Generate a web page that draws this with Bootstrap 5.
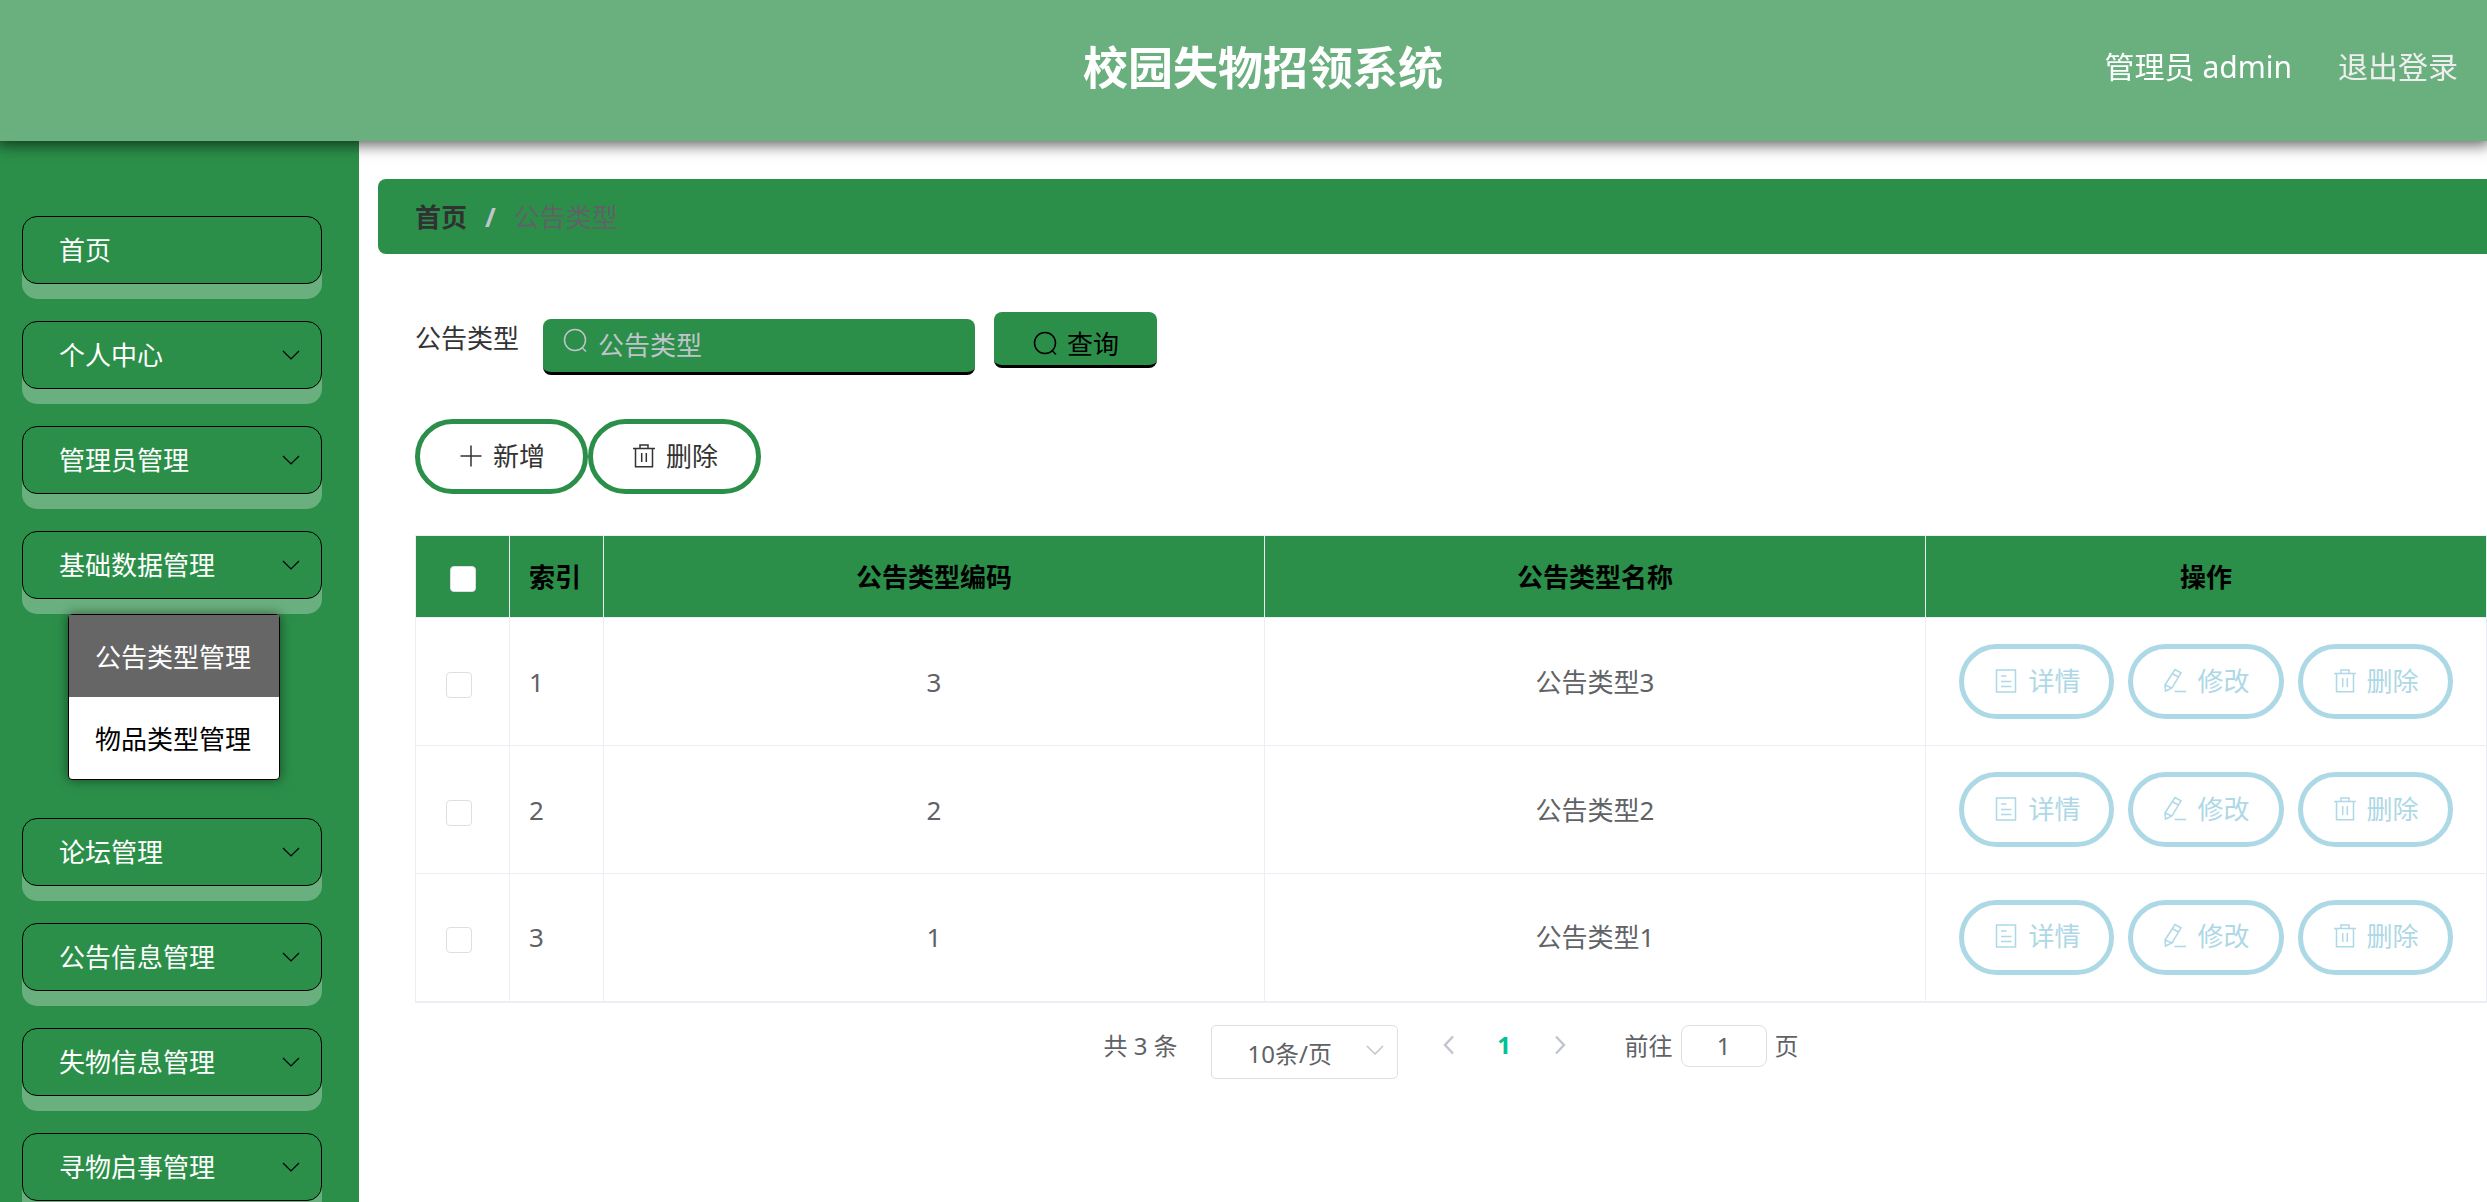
<!DOCTYPE html>
<html lang="zh-CN">
<head>
<meta charset="utf-8">
<meta name="viewport" content="width=device-width, initial-scale=1">
<title>校园失物招领系统</title>
<link href="https://cdn.jsdelivr.net/npm/bootstrap@5.3.0/dist/css/bootstrap.min.css" rel="stylesheet">
<style>
:root { --brand: #2b8f49; --brand-soft: #6ab07f; --line: #ebeef5; --ctl: #dcdfe6; --txt: #606266; }
body { font-family: "Noto Sans", "Noto Sans CJK SC", sans-serif; font-size: 26px; line-height: 36px; color: #333; background: #fff; }
.ico { width: 26px; height: 26px; flex: none; fill: none; stroke: currentColor; stroke-width: 1.5; }
.topbar { height: 141px; background: var(--brand-soft); box-shadow: 0 1px 14px 3px rgba(0,0,0,.62); z-index: 5; color: #fff; padding-bottom: 6px; }
.sys-title { font-size: 45px; line-height: 60px; font-weight: 700; margin-left: 44px; }
.userbox { font-size: 30px; line-height: 40px; gap: 46px; padding: 0 29px 2px 0; }
.userbox a { color: #eee; }
.side { width: 359px; background: var(--brand); padding: 75px 37px 30px 22px; overflow-y: auto; scrollbar-width: none; }
.side::-webkit-scrollbar { display: none; }
.side-btn { height: 68px; width: 100%; background: var(--brand); border: 1px solid #000; border-radius: 15px; box-shadow: 0 15px 0 var(--brand-soft); color: #fff; padding: 0 17px 0 36px; margin-bottom: 37px; flex: none; text-align: left; text-decoration: none; }
.side-btn .ico { color: #000; stroke-width: 1.2; }
.side-btn.opened { margin-bottom: 15px; }
.submenu { width: 212px; margin: 0 0 38px 46px; border: 1px solid #000; border-radius: 4px; box-shadow: 0 0 12px rgba(0,0,0,.5); background: #fff; z-index: 1; }
.submenu a { display: block; height: 82px; line-height: 84px; padding-left: 26px; color: #000; text-decoration: none; }
.submenu a.active { background: #666; color: #fff; }
.main-area { min-width: 0; padding: 38px 0 0 19px; overflow: hidden; }
.crumbs { height: 75px; background: var(--brand); border-radius: 8px 0 0 8px; padding-left: 37px; margin: 0; --bs-breadcrumb-divider-color: #c0c4cc; --bs-breadcrumb-item-padding-x: 18px; }
.crumbs a { color: #303133; font-weight: 700; text-decoration: none; }
.crumbs .breadcrumb-item + .breadcrumb-item::before { font-weight: 700; }
.crumbs .active { color: var(--txt); }
.content { padding: 58px 0 0 37px; }
.search-box { width: 432px; margin: 7px 19px 0 24px; }
.search-box input { width: 100%; height: 56px; background: var(--brand); border: 0; border-bottom: 3px solid #000; border-radius: 8px; padding: 0 20px 2px 55px; color: #fff; }
.search-box input::placeholder { color: #c0c4cc; opacity: 1; }
.search-box .ico { position: absolute; left: 19px; top: 9px; color: #c0c4cc; }
.query-btn { height: 56px; background: var(--brand); border: 0; border-bottom: 3px solid #000; border-radius: 8px; padding: 10px 38px 0; gap: 9px; color: #000; }
.pill { height: 75px; border: 5px solid var(--brand); border-radius: 38px; background: #fff; color: #333; gap: 9px; padding: 0 38px 2px; }
.pill-sm { border-color: #add8e6; color: #add8e6; padding: 0 29px 2px; }
.row-acts { gap: 14px; }
.tools { margin: 44px 0 41px; }
.grid { table-layout: fixed; width: 100%; border-collapse: collapse; color: var(--txt); border: 1px solid var(--line); border-bottom-width: 2px; }
.grid th, .grid td { border: 1px solid var(--line); text-align: center; padding: 0; }
.grid th { height: 82px; background: var(--brand); color: #000; font-weight: 700; }
.grid td { height: 128px; }
.grid .idx { text-align: left; padding-left: 19px; }
.grid .form-check-input[type=checkbox] { width: 26px; height: 26px; margin: 0 8px 0 0; border: 1px solid var(--ctl); border-radius: 4px; vertical-align: middle; background-color: #fff; }
.grid th .form-check-input[type=checkbox] { margin: 0; }
.pager { font-size: 24px; color: var(--txt); padding: 22px 0 0; }
.pager-total { line-height: 42px; }
.size-pick { width: 187px; margin: 0 38px 0 33px; }
.size-pick select { width: 100%; height: 54px; appearance: none; border: 1px solid var(--ctl); border-radius: 5px; background: #fff; color: var(--txt); padding: 4px 0 0 36px; }
.size-pick .ico { position: absolute; right: 10px; top: 12px; color: #c0c4cc; pointer-events: none; }
.pager-btn { background: none; border: 0; padding: 0; color: #c0c4cc; height: 40px; }
.pager-btn .ico { stroke-width: 2.4; display: block; }
.pager-now { font-weight: 700; color: #00c292; height: 40px; margin: 0 35px; width: 15px; background: none; border: 0; padding: 0; }
.jump { margin-left: 52px; gap: 8px; }
.jump input { width: 86px; height: 42px; border: 1px solid var(--ctl); border-radius: 8px; text-align: center; color: var(--txt); padding: 0; }
</style>
<script src="https://cdn.jsdelivr.net/npm/bootstrap@5.3.0/dist/js/bootstrap.bundle.min.js"></script>
</head>
<body>
<svg class="d-none">
  <symbol id="down" viewBox="0 0 26 26"><path d="M5 9l8 8 8-8"/></symbol>
  <symbol id="left" viewBox="0 0 26 26"><path d="M17 4.500l-8 8.500 8 8.500"/></symbol>
  <symbol id="right" viewBox="0 0 26 26"><path d="M9 4.500l8 8.500-8 8.500"/></symbol>
  <symbol id="find" viewBox="0 0 26 26"><circle cx="13" cy="12" r="10.500"/><path d="M20 19.500l4 4"/></symbol>
  <symbol id="plus" viewBox="0 0 26 26"><path d="M13 2.500v21M2.500 13h21"/></symbol>
  <symbol id="trash" viewBox="0 0 26 26"><path d="M2 5.500h22M9 5.500V2h8v3.500M4.500 5.500v18.200h17V5.500M10.700 10v9M15.300 10v9"/></symbol>
  <symbol id="doc" viewBox="0 0 26 26"><path d="M3.500 2h19v22h-19zM8 8h5.500M8 13.500h10.500M8 18.500h10.500"/></symbol>
  <symbol id="pen" viewBox="0 0 26 26"><path d="M3 17L13 1.500l6 3.300L10 20l-6.500 3zM3 17l7 3M10.500 5.800l6 3.200M12.500 23.500H24"/></symbol>
</svg>
<div class="vh-100 d-flex flex-column overflow-hidden">
  <header class="topbar d-flex align-items-center position-relative flex-shrink-0">
    <div class="flex-fill w-50"></div>
    <h1 class="sys-title mb-0 text-nowrap">校园失物招领系统</h1>
    <div class="userbox flex-fill w-50 d-flex justify-content-end text-nowrap">
      <span>管理员 admin</span>
      <a href="#" class="text-decoration-none">退出登录</a>
    </div>
  </header>
  <div class="d-flex flex-grow-1 overflow-hidden">
    <nav class="side d-flex flex-column flex-shrink-0">
      <a class="side-btn d-flex align-items-center" href="#">首页</a>
      <button class="side-btn d-flex align-items-center justify-content-between">个人中心<svg class="ico"><use href="#down"/></svg></button>
      <button class="side-btn d-flex align-items-center justify-content-between">管理员管理<svg class="ico"><use href="#down"/></svg></button>
      <button class="side-btn opened d-flex align-items-center justify-content-between" aria-expanded="true">基础数据管理<svg class="ico"><use href="#down"/></svg></button>
      <div class="submenu">
        <a class="active" href="#">公告类型管理</a>
        <a href="#">物品类型管理</a>
      </div>
      <button class="side-btn d-flex align-items-center justify-content-between">论坛管理<svg class="ico"><use href="#down"/></svg></button>
      <button class="side-btn d-flex align-items-center justify-content-between">公告信息管理<svg class="ico"><use href="#down"/></svg></button>
      <button class="side-btn d-flex align-items-center justify-content-between">失物信息管理<svg class="ico"><use href="#down"/></svg></button>
      <button class="side-btn d-flex align-items-center justify-content-between">寻物启事管理<svg class="ico"><use href="#down"/></svg></button>
    </nav>
    <main class="main-area flex-grow-1">
      <ol class="breadcrumb crumbs align-items-center">
        <li class="breadcrumb-item"><a href="#">首页</a></li>
        <li class="breadcrumb-item active">公告类型</li>
      </ol>
      <div class="content">
        <form class="d-flex align-items-start">
          <label for="kind" class="pt-2">公告类型</label>
          <div class="search-box position-relative">
            <input id="kind" type="text" placeholder="公告类型">
            <svg class="ico"><use href="#find"/></svg>
          </div>
          <button type="button" class="query-btn d-flex align-items-center"><svg class="ico"><use href="#find"/></svg>查询</button>
        </form>
        <div class="tools d-flex">
          <button class="pill d-flex align-items-center"><svg class="ico"><use href="#plus"/></svg>新增</button>
          <button class="pill d-flex align-items-center"><svg class="ico"><use href="#trash"/></svg>删除</button>
        </div>
        <table class="grid">
          <colgroup><col style="width:94px"><col style="width:94px"><col><col><col style="width:561px"></colgroup>
          <thead>
            <tr><th><input class="form-check-input" type="checkbox" aria-label="全选"></th><th class="idx">索引</th><th>公告类型编码</th><th>公告类型名称</th><th>操作</th></tr>
          </thead>
          <tbody>
            <tr><td><input class="form-check-input" type="checkbox" aria-label="选择 1"></td><td class="idx">1</td><td>3</td><td>公告类型3</td>
              <td><div class="row-acts d-flex justify-content-center">
                <button class="pill pill-sm d-flex align-items-center"><svg class="ico"><use href="#doc"/></svg>详情</button>
                <button class="pill pill-sm d-flex align-items-center"><svg class="ico"><use href="#pen"/></svg>修改</button>
                <button class="pill pill-sm d-flex align-items-center"><svg class="ico"><use href="#trash"/></svg>删除</button>
              </div></td></tr>
            <tr><td><input class="form-check-input" type="checkbox" aria-label="选择 2"></td><td class="idx">2</td><td>2</td><td>公告类型2</td>
              <td><div class="row-acts d-flex justify-content-center">
                <button class="pill pill-sm d-flex align-items-center"><svg class="ico"><use href="#doc"/></svg>详情</button>
                <button class="pill pill-sm d-flex align-items-center"><svg class="ico"><use href="#pen"/></svg>修改</button>
                <button class="pill pill-sm d-flex align-items-center"><svg class="ico"><use href="#trash"/></svg>删除</button>
              </div></td></tr>
            <tr><td><input class="form-check-input" type="checkbox" aria-label="选择 3"></td><td class="idx">3</td><td>1</td><td>公告类型1</td>
              <td><div class="row-acts d-flex justify-content-center">
                <button class="pill pill-sm d-flex align-items-center"><svg class="ico"><use href="#doc"/></svg>详情</button>
                <button class="pill pill-sm d-flex align-items-center"><svg class="ico"><use href="#pen"/></svg>修改</button>
                <button class="pill pill-sm d-flex align-items-center"><svg class="ico"><use href="#trash"/></svg>删除</button>
              </div></td></tr>
          </tbody>
        </table>
        <div class="pager d-flex justify-content-center align-items-start">
          <span class="pager-total">共 3 条</span>
          <div class="size-pick position-relative">
            <select aria-label="每页条数"><option>10条/页</option><option>20条/页</option></select>
            <svg class="ico"><use href="#down"/></svg>
          </div>
          <button class="pager-btn" aria-label="上一页"><svg class="ico"><use href="#left"/></svg></button>
          <button class="pager-now">1</button>
          <button class="pager-btn" aria-label="下一页"><svg class="ico"><use href="#right"/></svg></button>
          <div class="jump d-flex align-items-center">
            <label for="goto">前往</label><input id="goto" type="text" value="1"><span>页</span>
          </div>
        </div>
      </div>
    </main>
  </div>
</div>
</body>
</html>
